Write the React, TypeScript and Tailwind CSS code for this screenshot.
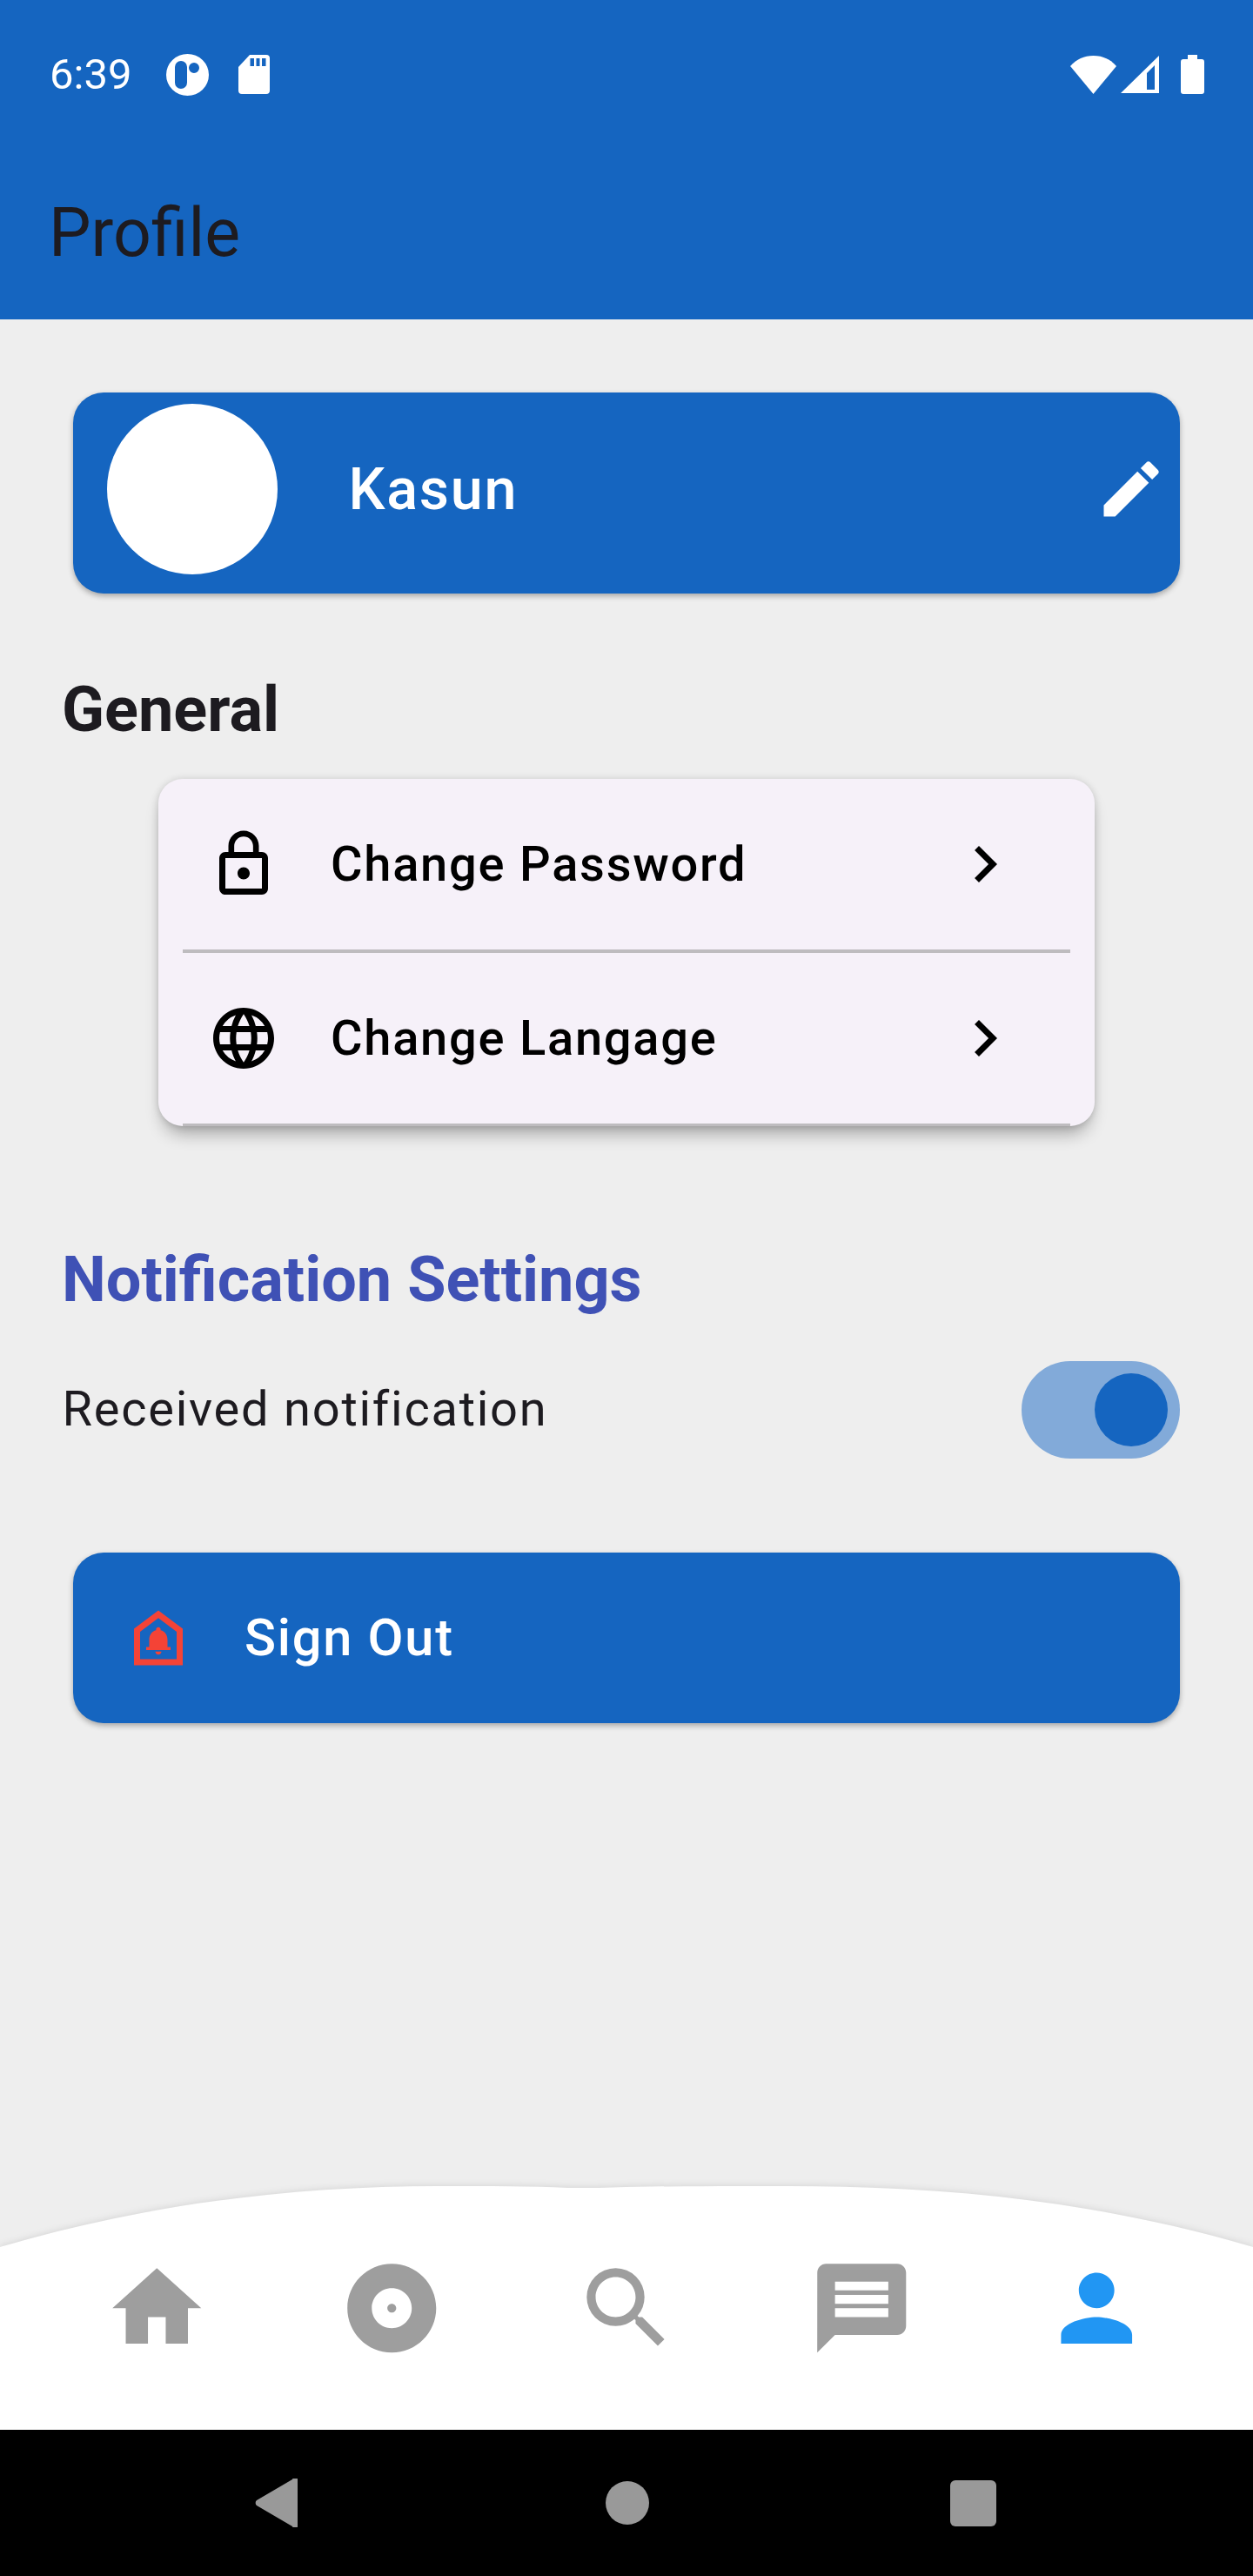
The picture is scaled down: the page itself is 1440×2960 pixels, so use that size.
import { MdAlbum, MdChevronRight, MdEdit, MdHome, MdLanguage, MdLockOutline, MdMessage, MdOutlineDoorbell, MdPerson, MdSearch } from 'react-icons/md'

const navItems = [
  { icon: MdHome, active: false },
  { icon: MdAlbum, active: false },
  { icon: MdSearch, active: false },
  { icon: MdMessage, active: false },
  { icon: MdPerson, active: true },
]

const settings = [
  { icon: MdLockOutline, label: 'Change Password' },
  { icon: MdLanguage, label: 'Change Langage' },
]

function StatusBar() {
  return (
    <div className="flex h-[171px] items-center pl-[57px] pr-[56px] text-white">
      <span className="w-[134px] text-[49px] leading-none">6:39</span>
      {/* app notification badge */}
      <svg width="49" height="48" viewBox="0 0 49 48" className="fill-white">
        <path fillRule="evenodd" d="M24.5 0a24.5 24 0 1 1 0 48a24.5 24 0 0 1 0-48zM17 8a7 7 0 0 0-7 7V33a7 7 0 0 0 14 0V15a7 7 0 0 0-7-7zM32 10a6 6 0 1 0 0 12a6 6 0 0 0 0-12z" />
      </svg>
      <svg width="36" height="45" viewBox="0 0 36 45" className="ml-[34px] fill-white">
        <path fillRule="evenodd" d="M13 0H32a4 4 0 0 1 4 4V41a4 4 0 0 1-4 4H4a4 4 0 0 1-4-4V14zM13.5 4V13H18V4zM20.5 4V13H24.5V4zM27 4V13H31.5V4z" />
      </svg>
      <div className="flex-1" />
      <svg width="53" height="44" viewBox="0 0 53 44" className="fill-white">
        <path d="M0 12C7 4 16 0 26.5 0S46 4 53 12L26.5 44z" />
      </svg>
      <svg width="44" height="43" viewBox="0 0 44 43" className="ml-[5px] fill-white">
        <path fillRule="evenodd" d="M44 0V43H0zM39 11L30 20V39H39z" />
      </svg>
      <svg width="27" height="45" viewBox="0 0 27 45" className="ml-[25px] fill-white">
        <path d="M8 0H19V5H24a3 3 0 0 1 3 3V42a3 3 0 0 1-3 3H3a3 3 0 0 1-3-3V8a3 3 0 0 1 3-3H8z" />
      </svg>
    </div>
  )
}

export default function App() {
  return (
    <div className="flex h-[2960px] w-[1440px] flex-col bg-[#eeeeee] font-['Roboto',sans-serif]">
      <header className="h-[367px] bg-[#1565c0]">
        <StatusBar />
        <div className="flex h-[196px] items-center pl-[56px] text-[77px] text-[#1d1b20]">Profile</div>
      </header>

      <main className="flex-1 pt-[84px]">
        {/* Profile card */}
        <div className="mx-[84px] flex h-[231px] items-center rounded-[35px] bg-[#1565c0] pb-[9px] pl-[39px] pr-[14.5px] shadow-[0_3px_6px_rgba(0,0,0,0.3)]">
          <div className="h-[196px] w-[196px] rounded-full bg-white" />
          <span className="ml-[81.5px] flex-1 pt-[2px] text-[66.5px] font-medium tracking-[1.75px] text-white">Kasun</span>
          <MdEdit size={84} className="text-white" />
        </div>

        <h2 className="ml-[71px] mt-[93px] text-[72px] font-bold leading-[82px] text-[#1d1b20]">General</h2>

        {/* General settings */}
        <div className="ml-[182px] mt-[38px] w-[1076px] rounded-[28px] bg-[#f6f1f9] shadow-[0_14px_20px_-6px_rgba(0,0,0,0.32),0_0_8px_rgba(0,0,0,0.14)]">
          {settings.map((item) => (
            <div key={item.label} className="mx-[28px]">
              <div className="flex h-[196px] items-center pl-[28px] pr-[56px]">
                <item.icon size={84} className="text-black" />
                <span className="ml-[58px] flex-1 text-[56px] font-medium tracking-[1.75px] text-black">{item.label}</span>
                <MdChevronRight size={84} className="text-black" />
              </div>
              <div className="h-[3.5px] bg-[#bebcbf]" />
            </div>
          ))}
        </div>

        <h2 className="ml-[71px] mt-[136px] text-[72px] font-bold leading-[82px] text-[#3f51b5]">Notification Settings</h2>

        <div className="ml-[71.5px] mr-[84px] mt-[52px] flex h-[112px] items-center justify-between">
          <span className="pb-[2px] text-[56px] tracking-[1.75px] text-[#1d1b20]">Received notification</span>
          <div className="flex h-[112px] w-[182px] items-center justify-end rounded-full bg-[#82aad9] pr-[14px]">
            <div className="h-[84px] w-[84px] rounded-full bg-[#1565c0]" />
          </div>
        </div>

        <div className="mx-[84px] mt-[108px] flex h-[196px] items-center rounded-[35px] bg-[#1565c0] pl-[56px] shadow-[0_3px_6px_rgba(0,0,0,0.3)]">
          <MdOutlineDoorbell size={84} className="text-[#f44336]" />
          <span className="ml-[57px] pt-[2px] text-[59.5px] font-medium tracking-[1.75px] text-white">Sign Out</span>
        </div>
      </main>

      {/* Bottom navigation */}
      <nav className="relative flex h-[280px] items-center px-[45px]">
        <svg width="1440" height="280" viewBox="0 0 1440 280" className="absolute inset-0 drop-shadow-[0_0_4px_rgba(0,0,0,0.12)]">
          <path d="M0 70C170 20 340 0 505 0C560 0 610 0 652 2C680 2 700 2 720 1C780 0 850 0 904 0C1100 0 1270 20 1440 70V280H0z" fill="#ffffff" />
        </svg>
        {navItems.map((item, index) => (
          <div key={index} className="relative flex flex-1 justify-center">
            <item.icon size={122.5} className={item.active ? 'text-[#2196f3]' : 'text-[#9e9e9e]'} />
          </div>
        ))}
      </nav>

      {/* System navigation */}
      <div className="flex h-[168px] items-center bg-black pl-[293px]">
        <svg width="49" height="56" viewBox="0 0 49 56" className="fill-[#999999]">
          <path d="M43 1a3 3 0 0 1 6 2V53a3 3 0 0 1-6 2L2 31a4 4 0 0 1 0-6z" />
        </svg>
        <div className="ml-[354px] h-[50px] w-[50px] rounded-full bg-[#999999]" />
        <div className="ml-[346px] h-[53px] w-[53px] rounded-[6px] bg-[#999999]" />
      </div>
    </div>
  )
}
